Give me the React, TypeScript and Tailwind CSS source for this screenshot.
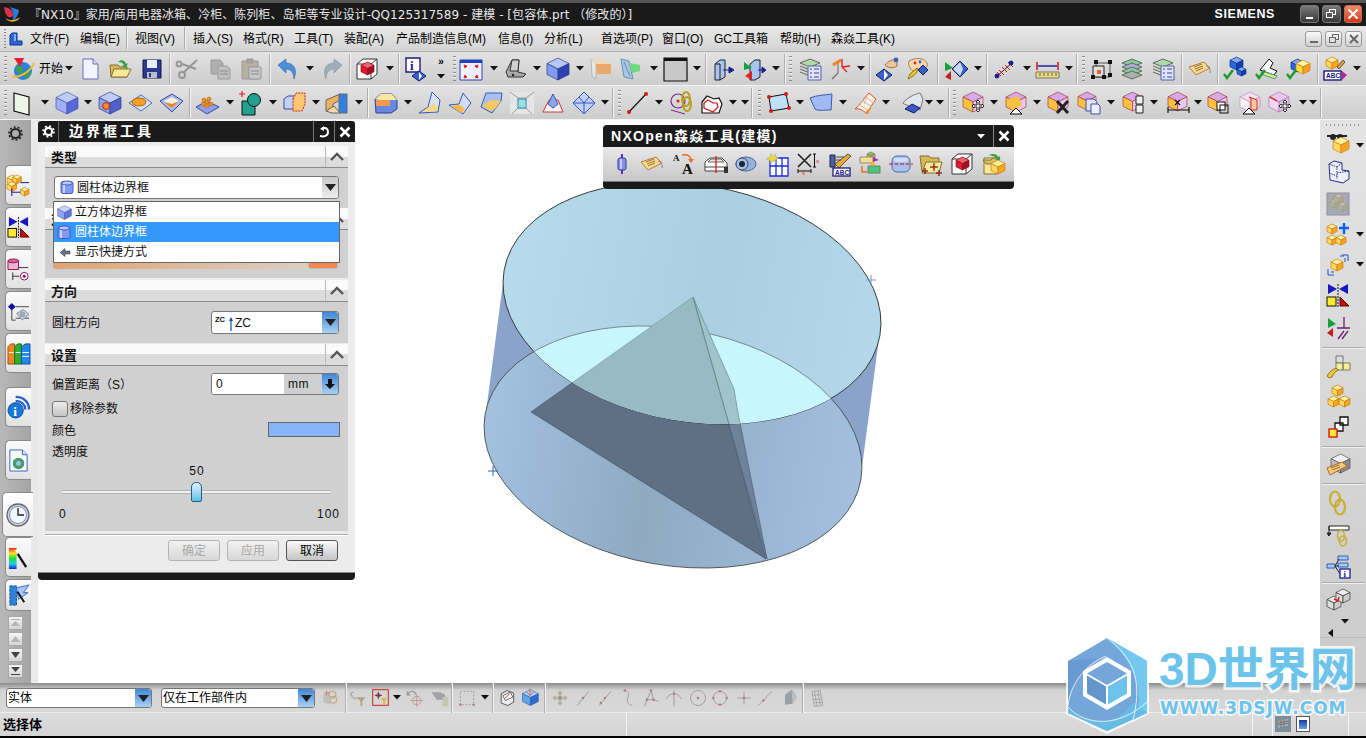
import React from 'react';

const cube = (x: number, y: number, s: number, t: string, l: string, r: string, st = '#444') => (
  <g stroke={st} strokeWidth="0.7" strokeLinejoin="round">
    <path d={`M${x + s / 2} ${y}L${x + s} ${y + s / 4}L${x + s / 2} ${y + s / 2}L${x} ${y + s / 4}Z`} fill={t} />
    <path d={`M${x} ${y + s / 4}L${x + s / 2} ${y + s / 2}V${y + s}L${x} ${y + (3 * s) / 4}Z`} fill={l} />
    <path d={`M${x + s} ${y + s / 4}L${x + s / 2} ${y + s / 2}V${y + s}L${x + s} ${y + (3 * s) / 4}Z`} fill={r} />
  </g>
);
const blue = (x: number, y: number, s: number) => cube(x, y, s, '#c8d4f8', '#8ea4ee', '#5f78d8', '#3c4c98');
const gold = (x: number, y: number, s: number) => cube(x, y, s, '#fff2a0', '#ffd860', '#f5a623', '#c88010');
const purp = (x: number, y: number, s: number) => cube(x, y, s, '#d8a8e8', '#ffc040', '#e8c8f0', '#a04040');
const chk = <path d="M1 17l3 4 6-8" stroke="#1a9a30" strokeWidth="2.4" fill="none" />;
const tri = <path d="M12 17l6 6H6z" fill="#fff" stroke="#000" />;
const move = (
  <g stroke="#222" strokeWidth="1" fill="#fff">
    <path d="M16 11l2-2 2 2h-1v3h3v-1l2 2-2 2v-1h-3v3h1l-2 2-2-2h1v-3h-3v1l-2-2 2-2v1h3v-3z" />
  </g>
);
const pt = (x: number, y: number) => <circle cx={x} cy={y} r="1.500" fill="#a86060" />;
const gs = { stroke: '#808080', fill: 'none', strokeWidth: 1 };

const IC: Record<string, React.ReactNode> = {
  globe: (<><circle cx="12" cy="14" r="9" fill="#2f80dc" /><path d="M6 9c3-1 6 1 6 3s-2 4-4 4-4-4-2-7zM14 16c3-1 6-1 6 0s-3 5-5 5-3-4-1-5z" fill="#35a548" /><path d="M1 19C8 22 20 14 23 6" stroke="#f0c020" strokeWidth="2" fill="none" /><path d="M3 1h10l-4 9z" fill="#e02030" /></>),
  new: (<><path d="M5 2h10l5 5v15H5z" fill="#f4f4ff" stroke="#6a6ac0" /><path d="M15 2v5h5" fill="#dde" stroke="#6a6ac0" /></>),
  open: (<><path d="M2 8h8l2 2h7v10H3z" fill="#d8b858" stroke="#807030" /><path d="M3 20l3-8h17l-4 8z" fill="#fbe89a" stroke="#807030" /><path d="M10 5c3-3 7-2 8 2l2-1-2 5-4-2 2-1c-1-2-3-3-6-3z" fill="#30a040" /></>),
  save: (<><path d="M3 3h18v18H3z" fill="#2c3a90" stroke="#10184a" /><path d="M7 3h10v8H7z" fill="#e8ecff" /><path d="M7 15h10v6H7z" fill="#b8bcc8" /><path d="M9 16h2v4H9z" fill="#2c3a90" /></>),
  cut: (<g stroke="#969696" strokeWidth="2" fill="none"><path d="M21 3L8 15M20 12L6 7" /><circle cx="6" cy="18" r="3" /><circle cx="3" cy="7" r="2.4" /></g>),
  copy: (<g fill="#b0b0b0" stroke="#999"><path d="M3 3h9l3 3v11H3z" /><path d="M10 9h9l3 3v10H10z" fill="#c0c0c0" /><path d="M12 14h8M12 17h8" stroke="#888" /></g>),
  paste: (<g stroke="#999"><path d="M3 4h16v18H3z" fill="#b8b0a0" /><path d="M8 2h6v4H8z" fill="#a4a4a4" /><path d="M10 10h12v12H10z" fill="#c8c8c8" /><path d="M12 14h8M12 17h8" stroke="#888" /></g>),
  undo: (<path d="M2 8l8-6v4c7 0 12 5 8 16 0-6-3-10-8-10v4z" fill="#4f8fd8" stroke="#2860a8" strokeWidth=".6" />),
  redo: (<path d="M22 8l-8-6v4C7 6 2 11 6 22c0-6 3-10 8-10v4z" fill="#a0aeb8" stroke="#84929c" strokeWidth=".6" />),
  wire: (<><path d="M2 7l6-5h14v15l-6 5H2z" fill="#fff" stroke="#333" /><path d="M2 7h14v15M16 7l6-5" stroke="#333" fill="none" />{cube(6, 5, 13, '#f06070', '#e01830', '#a01020', '#901020')}</>),
  info: (<><path d="M2 1h14v14H2z" fill="#fff" stroke="#1a1a80" strokeWidth="1.4" /><text x="6" y="13" fontSize="13" fontWeight="bold" fill="#1a1a80" fontFamily="Liberation Serif">i</text><path d="M15 14l7 5-7 5-7-5z" fill="#3860d8" stroke="#102060" /><path d="M15 15l3 4-3 4z" fill="#fff" /></>),
  fit: (<><path d="M1 3h22v20H1z" fill="#f0f0fc" stroke="#2040c0" /><path d="M1 3h22v3H1z" fill="#2040c0" /><path d="M5 8l3 1-2 2zM19 8l-3 1 2 2zM5 21l3-1-2-2zM19 21l-3-1 2-2z" fill="#e02020" stroke="#e02020" /></>),
  shade: (<><path d="M3 15L9 3h7l-1 12 8 2-3 3H5z" fill="#a8a8a8" stroke="#333" /><path d="M9 3h7l-1 11H7z" fill="#d0d0d0" stroke="#333" /><circle cx="10" cy="18" r="1.2" fill="#222" /></>),
  bcube: cube(1, 1, 22, '#b8c8f4', '#7f9cf0', '#3040b0', '#2c3c90'),
  orange: (<><path d="M2 2l5 4v16l-4-3z" fill="#e8e8e0" stroke="#b4b4b4" /><path d="M7 7h15v10H8z" fill="#eca868" /><path d="M2 2h12l8 5H7z" fill="#e8dcc0" /></>),
  green: (<><path d="M2 2l8 2 4 18-9-2z" fill="#a8c4e8" stroke="#7090a8" /><path d="M10 6l11 2v6l-8 2z" fill="#70d880" /><path d="M5 5l6 14" stroke="#7090a8" /></>),
  box: (<><path d="M1 1h23v23H1z" fill="#c8c8c8" stroke="#111" strokeWidth="1.2" /><path d="M1 1h23v3H1z" fill="#111" /></>),
  face: (<><path d="M3 7l5-4h5v17l-5 3H3z" fill="#a8c4f0" stroke="#222" /><path d="M3 7h5v16" fill="none" stroke="#222" /><path d="M11 13h9M17 10l5 3-5 3z" stroke="#102090" fill="#102090" /></>),
  face2: (<><path d="M7 7l5-4h5v17l-5 3H7z" fill="#a8c4f0" stroke="#222" /><path d="M1 5l8 6-8 2z" fill="#18a040" /><path d="M9 14v9l-7-4z" fill="#e02020" /><path d="M15 13h6M19 10l4 3-4 3z" stroke="#102090" fill="#102090" /></>),
  layl: (<><path d="M2 6l10-4 10 4-10 4z" fill="#b0d8a8" stroke="#666" /><path d="M2 9l10 4 10-4M2 12l10 4 10-4M2 15l10 4" stroke="#666" fill="#c8d8b0" /><path d="M10 9h13v14H10z" fill="#e0e4f8" stroke="#5060a8" /><path d="M12 12h2M16 12h5M12 16h2M16 16h5M12 20h2M16 20h5" stroke="#3040a0" /></>),
  csys: (<g fill="none" strokeWidth="1.4"><path d="M4 22l6-6" stroke="#777" /><path d="M10 16V6" stroke="#888" /><path d="M14 10l8-1M14 10V2M14 10l5 5" stroke="#e02020" /><path d="M5 8l8-5" stroke="#f08020" strokeWidth="3" /></g>),
  hand: (<><path d="M10 8c3-4 8-6 12-5v6c-3 2-8 3-12-1z" fill="#f0c898" stroke="#987040" /><circle cx="21" cy="3" r="2.4" fill="#4060c0" /><path d="M9 12l8 6-8 6-8-6z" fill="#3860c8" stroke="#102060" /><path d="M9 13l4 5-4 5z" fill="#fff" /></>),
  palette: (<><path d="M4 4c6-4 16-3 18 2s-4 7-9 6l-4 2c-2 1-7-6-5-10z" fill="#f8d8a8" stroke="#a08050" /><circle cx="10" cy="6" r="1.4" fill="#e02020" /><circle cx="15" cy="5" r="1.4" fill="#3060d0" /><path d="M12 15c-2 3-5 5-9 7l2-5 7-6z" fill="#e8c830" stroke="#987010" /><path d="M18 8l5 5-5 5-5-5z" fill="#3860c8" stroke="#102060" /></>),
  aim: (<><path d="M1 5l8 6-8 3z" fill="#18a040" /><path d="M7 14v9l-6-3z" fill="#c02020" /><path d="M16 4l8 8-8 8-8-8z" fill="#3860c8" stroke="#102060" /><path d="M16 5l3 7-3 7-7-7z" fill="#c8d8f8" /></>),
  stitch: (<g stroke="#c81818" strokeWidth="1"><path d="M3 21L21 5" stroke="#222" /><path d="M7 13l5 5M10 10l5 5M13 8l5 5M16 5l5 5M5 15l4 4" /><circle cx="19" cy="6" r="2" fill="#1a1a90" stroke="#1a1a90" /><circle cx="5" cy="19" r="2" fill="#1a1a90" stroke="#1a1a90" /></g>),
  ruler: (<><path d="M2 5v8M23 5v8" stroke="#c81818" strokeWidth="1.5" /><path d="M3 9h19" stroke="#1018a0" strokeWidth="1.4" /><path d="M1 15h23v6H1z" fill="#f0dc80" stroke="#776" /><path d="M5 16v3M9 16v3M13 16v3M17 16v3M21 16v3" stroke="#555" /></>),
  nodes: (<><path d="M6 6h14v14H6z" fill="none" stroke="#555" /><path d="M3 9h11v11H3z" fill="#e0e0e0" stroke="#222" /><path d="M7 13h4v4H7z" fill="#f06030" /><g fill="#111"><rect x="4" y="3" width="4" height="4" /><rect x="18" y="3" width="4" height="4" /><rect x="18" y="16" width="4" height="4" /><rect x="1" y="18" width="4" height="4" /><rect x="12" y="18" width="4" height="4" /></g></>),
  lay: (<g stroke="#607060"><path d="M2 6l10-4 10 4-10 4z" fill="#8cc8a0" /><path d="M2 10l10 4 10-4-10-4z" fill="#b0a8e0" /><path d="M2 14l10 4 10-4-10-4z" fill="#8cc8a0" /><path d="M2 18l10 4 10-4-10-4z" fill="#a8b0b0" /></g>),
  tag: (<><path d="M1 10l15-5 6 6-14 7z" fill="#f8d890" stroke="#b08040" /><path d="M6 10l8-3M7 12l8-3M8 14l7-3" stroke="#987030" /><path d="M18 9c3 1 5 4 4 7" stroke="#888" fill="none" /></>),
  chkb: (<>{cube(7, 0, 13, '#80a8f8', '#2868e0', '#1040b0', '#103080')}{cube(14, 10, 9, '#80a8f8', '#2868e0', '#1040b0', '#103080')}{chk}</>),
  chkh: (<><path d="M5 13L14 2l4 4-3 5 7 3-3 4z" fill="#fff" stroke="#111" /><path d="M7 14l15 5-2 3L6 17z" fill="#f0e870" stroke="#30a0a0" />{chk}</>),
  chkg: (<>{cube(5, 2, 13, '#80a8f8', '#2868e0', '#1040b0', '#103080')}{cube(10, 3, 14, '#fff2a0', '#ffe040', '#f5a020', '#c88010')}{chk}</>),
  abc: (<>{gold(3, 0, 12)}<path d="M14 10l6-7 2 2-6 7z" fill="#e8a020" stroke="#555" /><rect x="1" y="14" width="17" height="9" fill="#fff" stroke="#1a1a80" strokeWidth="1.4" /><text x="3" y="21" fontSize="6.5" fontWeight="bold" fill="#1a1a80" fontFamily="Liberation Sans">ABC</text><path d="M19 14l5 4-5 5z" fill="#c020a0" /></>),
  rect: (<><path d="M3 2l15 4v18L3 20z" fill="#eef6ea" stroke="#111" strokeWidth="1.2" /></>),
  bcube2: cube(2, 1, 22, '#c0ccf8', '#a0b0f4', '#5868d8', '#4858a8'),
  hole: (<>{cube(2, 1, 22, '#c0ccf8', '#8ea0ec', '#5060c8', '#303c90')}<circle cx="9" cy="15" r="3.4" fill="#f09020" stroke="#d02020" /></>),
  boss: (<><path d="M1 12L13 4l11 8-11 8z" fill="#d8e4f8" stroke="#5068b8" /><ellipse cx="11" cy="11" rx="7" ry="4" fill="#f5a020" stroke="#b06010" /></>),
  pocket: (<><path d="M1 10l12-7 11 7-11 11z" fill="#a8b8f0" stroke="#3848a0" /><path d="M5 10l8-4 7 4-7 7z" fill="#f8f0e0" /><path d="M5 11l8 6 7-7-7 3z" fill="#f08020" /></>),
  pads: (<><path d="M1 16l11-6 12 6-12 7z" fill="#8ea0ec" stroke="#3848a0" /><g fill="#f09020" stroke="#b06010" strokeWidth=".5"><circle cx="8" cy="13" r="2" /><circle cx="12" cy="11" r="2" /><circle cx="16" cy="13" r="2" /><circle cx="12" cy="15" r="2" /><circle cx="9" cy="9" r="2" /><circle cx="14" cy="8" r="2" /></g></>),
  teal: (<><path d="M4 10h13v14H4z" fill="#20a090" stroke="#111" /><circle cx="16" cy="9" r="6.5" fill="#20a090" stroke="#111" /><path d="M1 3h6M4 0v6" stroke="#e02020" strokeWidth="1.2" /></>),
  csplit: (<><path d="M1 8l4-3h10v13H1z" fill="#c0d0f8" stroke="#3848a0" /><path d="M10 8l3-6h9v11l-3 7h-9z" fill="#f8c870" stroke="#d02020" strokeDasharray="2 1" /></>),
  wall: (<><path d="M1 9l14-6v6L8 13v7H1z" fill="#f0b060" stroke="#666" /><path d="M14 3h8v19h-8z" fill="#3080e0" stroke="#666" /><path d="M1 20l8-5 6 7H7z" fill="#f8d8a8" stroke="#666" /></>),
  blend: (<><path d="M1 8l6-5h11l5 6v9l-6 4H2z" fill="#6888e0" stroke="#3040a0" /><path d="M1 8l6-5h11l5 6H6z" fill="#f8e8a0" /><path d="M2 9h14v6H2z" fill="#f09850" /></>),
  sh1: (<><path d="M14 1l8 8-2 12L1 22l9-6z" fill="#d8e4fa" stroke="#3858b8" /><path d="M4 21l12-9 4 5v3z" fill="#f8d880" /></>),
  sh2: (<><path d="M1 14l10-1 4-11 8 10-8 11z" fill="#d0dcf8" stroke="#3858b8" /><path d="M3 15l9-1 5 4-4 4z" fill="#f8b840" /></>),
  sh3: (<><path d="M6 2h16l-1 8-9 12-11-6z" fill="#a8c0f0" stroke="#3858b8" /><path d="M2 15l9-6 10 1-6 8-5 2z" fill="#f8c860" /></>),
  sh4: (<><path d="M0 1h24v22H0z" fill="#e4e6e6" /><path d="M0 1l8 6h8l8-6M8 7v4M16 7v4M2 23l6-6h8l6 6" stroke="#999" fill="none" /><path d="M8 8h8v9H8z" fill="#9adfea" stroke="#3090a8" /></>),
  sh5: (<><path d="M2 21l6-12h9l5 12z" fill="#f8f8ff" stroke="#d03030" /><path d="M7 13l5-10 5 10-5 4z" fill="#88a8e8" stroke="#3858b8" /></>),
  sh6: (<><path d="M12 1l11 11-11 11L1 12z" fill="#c0d0f8" stroke="#3858b8" /><path d="M1 12h22M7 6l5 6 5-6M12 12v11" stroke="#3858b8" fill="none" /></>),
  line: (<><path d="M3 21L20 3" stroke="#111" strokeWidth="1.2" /><circle cx="20" cy="3" r="2" fill="#d81818" /><circle cx="3" cy="21" r="2" fill="#d81818" /></>),
  chain: (<><circle cx="9" cy="10" r="7" fill="none" stroke="#7a2a8a" strokeWidth="1.2" /><circle cx="9" cy="10" r="1.5" fill="#d81818" /><path d="M2 19l14 4" stroke="#7a2a8a" /><ellipse cx="17" cy="8" rx="4" ry="7" fill="none" stroke="#b8a020" strokeWidth="2" /><ellipse cx="18" cy="13" rx="4" ry="7" fill="none" stroke="#b8a020" strokeWidth="2" /></>),
  heart: (<><path d="M3 11l5-6 7 3 5-1 3 6-3 9H3z" fill="#fff" stroke="#111" strokeWidth="1.2" /><path d="M5 12l4-3 5 3 4 0 1 4-5 5-9-4z" fill="none" stroke="#d01818" strokeWidth="1.2" /></>),
  qrect: (<><path d="M3 6l17-3 3 14-18 3z" fill="#c0e0f8" stroke="#111" /><g fill="#d81818"><circle cx="3" cy="6" r="2" /><circle cx="20" cy="3" r="2" /><circle cx="23" cy="17" r="2" /><circle cx="5" cy="20" r="2" /></g></>),
  surf: (<path d="M1 7c7-3 15-3 22-4l-1 16c-7 0-14 1-16-1z" fill="#a0baf4" stroke="#3858b8" />),
  mesh: (<><path d="M3 18C8 14 12 7 17 2l7 6c-3 4-7 11-9 15C11 19 7 17 3 18z" fill="#fff0e0" stroke="#e05020" /><path d="M8 14l9 6M11 10l9 6M14 6l8 6M11 8l-3 6M15 5l-3 8" stroke="#bbb" /><path d="M14 22l4-4" stroke="#f09020" strokeWidth="2" /></>),
  wrap: (<><path d="M3 12c6-7 13-9 17-10l3 6-3 11-9-3c-3-2-6-2-8-4z" fill="#e4e4ee" stroke="#777" /><path d="M5 18l7-5 8 4-6 5z" fill="#3858c8" stroke="#102060" /></>),
  mv1: (<>{purp(3, 1, 20)}{move}</>),
  mv2: (<>{purp(2, 1, 20)}<path d="M4 8l10-3 4 8-6 6-7-2z" fill="#f8c040" />{tri}</>),
  mv3: (<>{purp(2, 1, 20)}<path d="M11 10l11 12M22 10L11 22" stroke="#222" strokeWidth="3" /></>),
  mv4: (<>{purp(1, 1, 18)}<path d="M9 8h8l3 3v9H9z" fill="#dde0f8" stroke="#4050a0" /><path d="M14 13h7l2 2v8h-9z" fill="#eef" stroke="#4050a0" /></>),
  mv5: (<>{purp(2, 1, 19)}<path d="M15 5h7v8h-7zM15 14h7v8h-7z" fill="#f0f0f0" stroke="#222" /></>),
  mv6: (<>{purp(2, 1, 19)}<path d="M2 19h21M2 16v6M23 16v6" stroke="#111" strokeWidth="1.2" /><path d="M9 9l5 5M14 9l-5 5" stroke="#111" strokeWidth="1.2" /></>),
  mv7: (<>{purp(2, 1, 19)}<rect x="11" y="11" width="8" height="8" fill="#fff" stroke="#111" /><rect x="14" y="14" width="8" height="8" fill="none" stroke="#111" /></>),
  mv8: (<>{cube(3, 1, 20, '#f0e0f0', '#f8f0f8', '#f0d0e0', '#c090c0')}<path d="M12 6l8 3v10h-6V8z" fill="#f8c8a0" stroke="#d83030" />{tri}</>),
  mv9: (<>{cube(2, 1, 20, '#e8c8f0', '#f0d8f0', '#e0c0e8', '#b070b0')}<path d="M3 6l7 4" stroke="#e03030" strokeWidth="1.5" />{move}</>),
  cyl: (<><path d="M12 2v20" stroke="#7020c0" strokeWidth="2" /><rect x="8" y="6" width="8" height="12" rx="2" fill="#8890e8" stroke="#3040a0" /><rect x="10" y="7" width="2" height="10" fill="#c8ccf8" /></>),
  aa: (<><text x="1" y="9" fontSize="9" fontWeight="bold" fill="#111" fontFamily="Liberation Serif">A</text><text x="10" y="22" fontSize="15" fontWeight="bold" fill="#111" fontFamily="Liberation Serif">A</text><path d="M10 3c6-1 9 1 9 6" stroke="#e87020" strokeWidth="1.5" fill="none" /><path d="M16 7h6l-3 4z" fill="#e87020" /></>),
  car: (<><path d="M1 10l5-4h12l5 5v8H1z" fill="#fff" stroke="#444" /><path d="M4 10l3-3h10l3 3z" fill="#e8e8e8" stroke="#666" /><path d="M1 15h23" stroke="#444" /><path d="M12 4v17" stroke="#d81818" strokeWidth="1.3" /><path d="M20 15h4v6h-4z" fill="#333" /></>),
  bore: (<><ellipse cx="13" cy="12" rx="10" ry="7" fill="#98b0d8" stroke="#5068a0" /><circle cx="9" cy="12" r="6" fill="#a8c0e8" stroke="#304878" /><circle cx="9" cy="12" r="3" fill="#223" /></>),
  grid: (<><path d="M5 6h18v18H5z" fill="#fff" stroke="#1a2ae0" strokeWidth="1.3" /><path d="M5 14h18M11 6v18M17 6v18" stroke="#1a2ae0" strokeWidth="1.3" /><path d="M6 1l2 3 3-2-1 3 4 1-4 2 1 3-3-2-2 3-1-4-4-1 4-2z" fill="#f8d820" stroke="#80b0e0" strokeWidth=".5" /></>),
  dimx: (<><path d="M2 2l13 13M15 2L2 15" stroke="#222" strokeWidth="1.600" /><path d="M2 19h13M2 17v4M15 17v4M17 2h3M17 15h3M18.500 2v13" stroke="#111" /><text x="6" y="23" fontSize="6" fill="#d01818" fontFamily="Liberation Sans">x</text><text x="20" y="11" fontSize="6" fill="#d01818" fontFamily="Liberation Sans">x</text></>),
  note: (<><path d="M2 3h5v12H2z" fill="#5060a8" stroke="#223" /><path d="M7 12L20 2l3 2-12 12z" fill="#f0a830" stroke="#555" /><path d="M8 5h8M8 8h5" stroke="#445" /><rect x="5" y="16" width="17" height="8" fill="#fff" stroke="#1a1a80" strokeWidth="1.3" /><text x="7" y="23" fontSize="6.5" fontWeight="bold" fill="#1a1a80" fontFamily="Liberation Sans">ABC</text></>),
  exch: (<>{cube(9, 0, 8, '#70d070', '#f0b020', '#d8a040', '#777')}<path d="M2 5h13v6H2z" fill="#f8e090" stroke="#888" /><path d="M10 14h12v7H10z" fill="#48c878" stroke="#777" /><path d="M12 13l3-4 3 4z" fill="#f8b820" /><path d="M4 14v6h5" stroke="#e07020" strokeWidth="1.5" fill="none" /><path d="M15 5l6 3-6 2z" fill="#a030c0" /></>),
  tube: (<><rect x="3" y="4" width="18" height="16" rx="5" fill="#a8c0f0" stroke="#5068a8" /><rect x="5" y="6" width="14" height="4" rx="2" fill="#d0dcf8" /><path d="M0 12h24" stroke="#b01818" strokeDasharray="4 1.5" /></>),
  fpts: (<><path d="M1 4h9l2 2h8v13H3z" fill="#d8b858" stroke="#807030" /><path d="M3 21l4-11h16l-3 11z" fill="#fbe89a" stroke="#807030" /><path d="M11 15h8M15 11v8M3 19h6M6 16v6M17 21h6M20 18v6" stroke="#111" /><circle cx="15" cy="15" r="1.500" fill="#e01818" /><circle cx="6" cy="19" r="1.500" fill="#e01818" /><circle cx="20" cy="21" r="1.500" fill="#e01818" /></>),
  opcube: (<><path d="M3 6h14v16H3z" fill="#fbe89a" stroke="#807030" /><path d="M2 8h8l2-2h7l-3 6H5z" fill="#d8c060" stroke="#807030" /><path d="M8 3c4-2 8-1 9 2l2-1-1 5-4-2 2-1c-1-1-4-2-8-3z" fill="#30a040" />{gold(10, 8, 14)}</>),
  binoc: (<><circle cx="7" cy="4" r="3" fill="#223" /><circle cx="14" cy="4" r="3" fill="#223" />{gold(7, 4, 16)}<path d="M1 3h20" stroke="#222" strokeWidth="2" /></>),
  wireg: (<g fill="#eef0f8" stroke="#2a2a90"><path d="M3 4l5-3 8 2v7l7 1v8l-6 4-13-3z" /><path d="M3 4l8 3v12M11 7l5-4M11 13l12-2M3 13l8 3" fill="none" strokeDasharray="1.5 1" /></g>),
  grayc: (<><rect x="1" y="1" width="22" height="22" fill="#a8a8b0" stroke="#9090a8" /><g opacity=".7">{cube(4, 7, 9, '#d0c8a8', '#c0b890', '#b0a880', '#998')}{cube(12, 10, 9, '#d0c8a8', '#c0b890', '#b0a880', '#998')}{cube(8, 2, 9, '#d0c8a8', '#c0b890', '#b0a880', '#998')}</g></>),
  addc: (<>{gold(1, 2, 10)}{gold(1, 13, 10)}{gold(10, 13, 10)}<path d="M18 1v11M13 6h10" stroke="#0a60f0" strokeWidth="2.4" /></>),
  arrc: (<>{gold(5, 7, 12)}<path d="M16 3h6v6M19 6v4M14 4h4" stroke="#2050d0" fill="none" /><path d="M2 17v6h6M5 20h3" stroke="#2050d0" fill="none" /></>),
  bowtie: (<><path d="M2 0l9 5-9 5zM22 0l-9 5 9 5z" fill="#1818c0" /><rect x="1" y="13" width="9" height="9" fill="#ffe830" stroke="#111" /><path d="M14 13l9 9h-9z" fill="#c01010" stroke="#600" /><path d="M12 0v24" stroke="#111" strokeDasharray="2 1" /></>),
  perp: (<><path d="M2 3l8 6-8 4z" fill="#18a040" /><path d="M7 13v9l-6-4z" fill="#c02020" /><path d="M18 2v11M11 13h13M12 24l6-8M16 24l6-8" stroke="#702070" strokeWidth="1.3" /></>),
  key: (<><path d="M10 2h7v7h-7z" fill="#ddd" stroke="#777" /><path d="M10 9h7v7h-7zM17 9h7v7h-7z" fill="#f8f090" stroke="#777" /><path d="M1 22c2-4 5-6 9-8l2 2c-3 2-5 4-6 7-2 1-4 1-5-1z" fill="#e8c840" stroke="#987010" /></>),
  three: (<>{gold(6, 1, 11)}{gold(2, 12, 11)}{gold(13, 12, 11)}</>),
  steps: (<><path d="M14 2h8v8h-8zM9 8h8v8H9z" fill="#fff" stroke="#111" strokeWidth="1.3" /><rect x="3" y="14" width="8" height="8" fill="#ffe830" stroke="#d81818" strokeWidth="1.4" /></>),
  tagc: (<>{cube(5, 1, 19, '#eee', '#bbb', '#8a8a8a', '#555')}<path d="M1 15l15-6 5 4-17 9z" fill="#f8c880" stroke="#b06820" /><path d="M5 15l8-3M6 17l8-3" stroke="#987030" /></>),
  link: (<g fill="none" stroke="#c8b030" strokeWidth="2.2"><ellipse cx="9" cy="8" rx="5" ry="7.5" /><ellipse cx="14" cy="16" rx="5" ry="7.5" /></g>),
  linkl: (<><path d="M3 4h20v4H3z" fill="#fff" stroke="#222" /><path d="M3 4v8M1 11h4l-2 3z" stroke="#222" fill="#222" /><g fill="none" stroke="#c8b030" strokeWidth="1.6"><ellipse cx="15" cy="14" rx="3.5" ry="5.5" /><ellipse cx="17" cy="19" rx="3.5" ry="5" /></g></>),
  tree: (<><path d="M12 2h10v4H12zM12 9h10v4H12zM1 10h8v4H1z" fill="#a8c8f8" stroke="#3060b0" /><path d="M9 12l4-7M9 12h4M9 12l5 8" stroke="#223" /><rect x="14" y="15" width="10" height="9" fill="#fff" stroke="#1a1a90" strokeWidth="1.3" /><text x="17.5" y="23" fontSize="9" fontWeight="bold" fill="#1a1a90" fontFamily="Liberation Serif">i</text></>),
  twoc: (<>{cube(1, 8, 14, '#eee', '#ddd', '#ccc', '#333')}{cube(10, 1, 14, '#eee', '#ddd', '#ccc', '#333')}<path d="M8 11l4 2 1-4" stroke="#d81818" fill="none" strokeWidth="1.4" /></>),
  lasm: (<>{gold(0, 1, 11)}{gold(6, 1, 9)}{gold(0, 8, 10)}{gold(14, 14, 9)}<path d="M5 15v8M5 19h9M14 9h9" stroke="#1010a0" /></>),
  lbow: (<><path d="M2 1l9 5-9 5zM22 1l-9 5 9 5z" fill="#1818c0" /><rect x="1" y="13" width="9" height="9" fill="#ffe830" stroke="#111" /><path d="M14 13l9 9h-9z" fill="#c01010" stroke="#600" /><path d="M12 1v22" stroke="#111" strokeDasharray="2 1" /></>),
  lcyl: (<><path d="M1 3h11v9H1z" fill="#e8b8d0" stroke="#901050" /><ellipse cx="6.5" cy="3" rx="5.5" ry="2" fill="#e060a0" stroke="#901050" /><path d="M12 10h10M6 15v8M6 19h7" stroke="#333" /><circle cx="18" cy="19" r="4" fill="#fff" stroke="#901050" /><circle cx="18" cy="19" r="1.6" fill="#901050" /></>),
  lnav: (<><path d="M5 3L1 7l4 4 4-4z" fill="#1010a0" /><path d="M5 10v11M5 21h4M9 7h14M9 19h14" stroke="#444" /><path d="M10 14l7-4 6 5-7 6z" fill="#c8d0e0" stroke="#8090a8" /><circle cx="16" cy="15" r="3" fill="#a0a8b8" /></>),
  lbook: (<><path d="M1 5l3-3h4v21H1z" fill="#f08820" stroke="#a05010" /><path d="M8 5l3-3h4v21H8z" fill="#30b030" stroke="#107010" /><path d="M15 5l4-3h5v21h-9z" fill="#2088e8" stroke="#1050a0" /><path d="M2 11h5M9 11h5M16 11h7M16 15h7" stroke="#fff" /></>),
  lrss: (<><circle cx="9" cy="15" r="8" fill="#1878d8" stroke="#0c4a98" /><text x="6.5" y="21" fontSize="14" fontWeight="bold" fill="#fff" fontFamily="Liberation Serif">i</text><path d="M9 5c6 0 10 4 10 9M9 1c9 0 14 6 14 13" stroke="#2a60d0" strokeWidth="2.4" fill="none" /></>),
  ldoc: (<><path d="M3 1h13l5 5v17H3z" fill="#fff" stroke="#3060c8" /><path d="M16 1v5h5" fill="#cde" stroke="#3060c8" /><circle cx="12" cy="15" r="6" fill="#4a9a70" /><circle cx="12" cy="15" r="2.5" fill="#9ac8e8" /></>),
  lclock: (<><circle cx="12" cy="12" r="11" fill="#c8d4f0" stroke="#666" strokeWidth="1.3" /><circle cx="12" cy="12" r="8.5" fill="#f4f6ff" stroke="#8090b0" /><path d="M12 5v7h6" stroke="#222" strokeWidth="1.4" fill="none" /></>),
  lrain: (<><defs><linearGradient id="rb" x1="0" y1="0" x2="0" y2="1"><stop offset="0" stopColor="#ff2020" /><stop offset=".25" stopColor="#ffe020" /><stop offset=".5" stopColor="#20e040" /><stop offset=".75" stopColor="#20d0e0" /><stop offset="1" stopColor="#2020e0" /></linearGradient></defs><rect x="2" y="2" width="8" height="22" fill="url(#rb)" /><path d="M11 8l9 14" stroke="#111" strokeWidth="2.4" /><path d="M11 1l1 3 3 1-3 1-1 3-1-3-3-1 3-1z" fill="#fff" /></>),
  lwing: (<><path d="M3 2h7v20H3z" fill="#3080d8" stroke="#1050a0" strokeDasharray="3 1" /><path d="M10 4l13-3-6 8 5 0-10 7z" fill="#a8c8f8" stroke="#3070d0" /><path d="M11 8l7 11" stroke="#111" strokeWidth="2" /></>),
  b1: (<><path d="M4 8l8-4v16l-8-3z" fill="#b8b8b8" /><g fill="none" strokeWidth={1.600} stroke="#c0a070"><circle cx="15" cy="8" r="4" /><circle cx="16" cy="14" r="4" /></g><path d="M8 9v-6M5 6h6" stroke="#a86060" /></>),
  b2: (<><path d="M3 6c1 6 5 7 9 6M3 6l4-1M3 6l2 4" stroke="#8a9a9a" strokeWidth="1.400" fill="none" /><path d="M11 11h10l-4 5v6h-2v-6z" fill="#a09470" /></>),
  b3: (<><rect x="1" y="1" width="22" height="22" fill="none" stroke="#c81818" strokeWidth="1.300" /><path d="M9 4v10M4 9h10" stroke="#702020" strokeWidth="1.200" /><circle cx="9" cy="9" r="2.500" fill="none" stroke="#702020" /><path d="M13 13h8l-3 4v4h-2v-4z" fill="#e8b020" /></>),
  b4: (<><path d="M3 7c3-4 9-4 10 1" stroke="#8a8a8a" strokeWidth="1.600" fill="none" /><path d="M2 3v6h5z" fill="#8a8a8a" /><circle cx="14" cy="15" r="5" fill="none" stroke="#b08080" /><path d="M14 7v16M6 15h16" stroke="#b08080" /></>),
  b5: (<><path d="M2 5h10l6 3v6H8z" fill="#909090" /><path d="M15 11h7v11h-7z" fill="#c0c0a8" /></>),
  b6: (<><path d="M4 4h16v16H4z" fill="none" stroke="#777" strokeDasharray="2 2" /><g>{pt(4, 20)}{pt(20, 20)}</g></>),
  b7: (<><path d="M5 18V7l7-4 8 3v11l-7 4z" fill="#eee" stroke="#333" /><path d="M7 9l9-4 3 6-9 4z" fill="#fff" stroke="#444" /><path d="M10 12l5-5" stroke="#d81818" strokeWidth="1.200" /></>),
  b8: (<>{cube(3, 2, 19, '#a8d8f8', '#50a0e8', '#2060c8', '#1850a0')}<path d="M12 1v9M8 5l4 4 5-5" stroke="#e04040" fill="none" /></>),
  s1: (<><path d="M12 3l3 3-3 3-3-3zM12 15l3 3-3 3-3-3zM6 9l3 3-3 3-3-3zM18 9l3 3-3 3-3-3z" fill="#a8a088" /><circle cx="12" cy="12" r="3" fill="#90a090" />{pt(12, 12)}</>),
  s2: (<><path d="M5 21L19 4" {...gs} />{pt(12, 12)}</>),
  s3: (<><path d="M5 21L19 4" {...gs} />{pt(12, 12)}{pt(7, 18)}</>),
  s4: (<><path d="M8 3c3 0 6 3 4 8s0 9 5 10" {...gs} />{pt(8, 3)}</>),
  s5: (<><path d="M4 22L12 3l3 11 6 2M7 14h8" {...gs} />{pt(12, 3)}{pt(7, 14)}{pt(15, 14)}</>),
  s6: (<><path d="M12 3v19M3 13c2-4 5-6 9-6s7 2 9 6" {...gs} />{pt(12, 7)}</>),
  s7: (<><circle cx="12" cy="12" r="9" {...gs} />{pt(12, 12)}</>),
  s8: (<><circle cx="12" cy="12" r="8" {...gs} />{pt(12, 4)}{pt(12, 20)}{pt(4, 12)}{pt(20, 12)}</>),
  s9: (<><path d="M12 4v16M4 12h16" {...gs} />{pt(12, 12)}</>),
  s10: (<><path d="M4 21L20 4" {...gs} />{pt(10, 15)}</>),
  s11: (<><path d="M6 20V8l8-6 6 9-5 8z" fill="#888f98" /><path d="M14 4l6 7-5 8" fill="#b0b8c0" /></>),
  s12: (<><path d="M6 4l10-1 3 18-10 1z" fill="none" stroke="#909090" /><path d="M6 9l11-1M7 14l11-1M8 18l11-1M9 4l3 18M13 3l3 18" stroke="#909090" /></>),
};

const FONT = "font-['Liberation_Sans','Noto_Sans_CJK_SC',sans-serif]";

const Icon = ({ n, s = 24 }: { n: string; s?: number }) => (
  <svg width={s} height={s} viewBox="0 0 24 24" className="block shrink-0 overflow-visible">{IC[n]}</svg>
);
const Caret = () => (
  <svg width="8" height="5" viewBox="0 0 8 5" className="block"><path d="M0 0h8L4 4.500z" fill="#111" /></svg>
);
const Grip = () => (
  <div className="w-[3px] h-[25px] bg-[repeating-linear-gradient(to_bottom,#8a8a8a_0,#8a8a8a_1px,#f4f4f4_1px,#f4f4f4_2px,transparent_2px,transparent_4px)]" />
);
const Sep = () => <div className="w-[2px] h-[30px] border-l border-[#aeaeae] border-r border-r-[#f4f4f4]" />;

type It = [string, number];
const widthOf = (k: string) => (k === 'g' ? 3 : k === '|' ? 2 : k === '^' ? 8 : k === 'more' ? 10 : 24);
const Row = ({ items, fade }: { items: It[]; fade?: boolean }) => {
  let end = 0;
  return (
    <div className="flex items-center h-full">
      {items.map(([k, x], i) => {
        const w = widthOf(k);
        const ml = x - w / 2 - end;
        end = x + w / 2;
        const small = fade && k !== '|' && k !== '^';
        return (
          <div key={i} className="shrink-0" style={{ marginLeft: ml, width: w }}>
            {k === 'g' ? <Grip /> : k === '|' ? <Sep /> : k === '^' ? <Caret /> : k === 'more' ? (
              <div className="flex flex-col items-center gap-[8px]"><span className="text-[10px] leading-[8px] font-bold text-black">»</span><Caret /></div>
            ) : small ? (
              <div className={`flex justify-center ${k === 'b3' ? '' : k === 'b7' || k === 'b8' ? 'opacity-90' : 'opacity-75'}`}><Icon n={k} s={k === 'b3' ? 17 : 20} /></div>
            ) : <Icon n={k} />}
          </div>
        );
      })}
    </div>
  );
};

const T1: It[] = [['g', 5], ['globe', 23], ['^', 69], ['new', 90], ['open', 120], ['save', 152], ['|', 170], ['cut', 188], ['copy', 220], ['paste', 251], ['|', 270], ['undo', 288], ['^', 310], ['redo', 332], ['|', 350], ['wire', 367], ['^', 390], ['|', 399], ['info', 416], ['more', 441], ['g', 454], ['fit', 471], ['^', 494], ['shade', 515], ['^', 537], ['bcube', 558], ['^', 580], ['orange', 601], ['green', 631], ['^', 654], ['box', 675], ['^', 697], ['|', 706], ['face', 724], ['face2', 755], ['^', 776], ['|', 785], ['g', 790], ['layl', 810], ['csys', 840], ['^', 861], ['|', 870], ['hand', 887], ['palette', 917], ['|', 938], ['aim', 956], ['^', 978], ['|', 987], ['stitch', 1004], ['^', 1027], ['ruler', 1047], ['^', 1069], ['|', 1077], ['g', 1083], ['nodes', 1102], ['lay', 1132], ['layl', 1163], ['|', 1182], ['tag', 1200], ['|', 1218], ['chkb', 1235], ['chkh', 1267], ['chkg', 1298], ['|', 1318], ['abc', 1335], ['^', 1357]];
const T2: It[] = [['g', 5], ['rect', 23], ['^', 45], ['bcube2', 66], ['^', 88], ['hole', 109], ['boss', 140], ['pocket', 171], ['|', 190], ['pads', 207], ['^', 230], ['teal', 250], ['^', 273], ['csplit', 295], ['^', 316], ['wall', 337], ['^', 359], ['|', 368], ['blend', 386], ['^', 408], ['sh1', 430], ['sh2', 460], ['sh3', 492], ['sh4', 522], ['sh5', 553], ['sh6', 584], ['^', 605], ['|', 613], ['g', 619], ['line', 638], ['^', 659], ['chain', 681], ['heart', 711], ['^', 733], ['^', 745], ['|', 752], ['g', 759], ['qrect', 778], ['^', 800], ['surf', 821], ['^', 843], ['mesh', 864], ['^', 886], ['wrap', 912], ['^', 929], ['^', 940], ['|', 949], ['g', 954], ['mv1', 972], ['^', 994], ['mv2', 1016], ['^', 1037], ['mv3', 1058], ['mv4', 1089], ['^', 1111], ['mv5', 1133], ['^', 1154], ['mv6', 1178], ['^', 1198], ['mv7', 1218], ['mv8', 1249], ['mv9', 1279], ['^', 1303], ['^', 1313], ['|', 1321]];
const FT: It[] = [['cyl', 19], ['tag', 49], ['aa', 81], ['car', 113], ['bore', 142], ['grid', 174], ['dimx', 205], ['note', 237], ['exch', 267], ['tube', 298], ['fpts', 328], ['wire', 359], ['opcube', 390]];
const B: It[] = [['b1', 330], ['|', 346], ['b2', 358], ['b3', 380], ['^', 397], ['b4', 415], ['b5', 440], ['|', 452], ['b6', 467], ['^', 485], ['|', 493], ['b7', 507], ['b8', 530], ['|', 545], ['s1', 560], ['s2', 583], ['s3', 605], ['s4', 628], ['s5', 651], ['s6', 674], ['s7', 698], ['s8', 720], ['s9', 744], ['s10', 765], ['s11', 790], ['|', 803], ['s12', 817]];

const menu: [string, number][] = [['文件(F)', 30], ['编辑(E)', 80], ['视图(V)', 135], ['插入(S)', 193], ['格式(R)', 243], ['工具(T)', 294], ['装配(A)', 344], ['产品制造信息(M)', 396], ['信息(I)', 498], ['分析(L)', 544], ['首选项(P)', 601], ['窗口(O)', 662], ['GC工具箱', 714], ['帮助(H)', 780], ['森焱工具(K)', 831]];

const TitleBar = () => (
  <div className="h-[26px] shrink-0 flex flex-col">
    <div className="h-[3px] bg-[#555555]" />
    <div className="flex-1 bg-[#1a1a1a] flex items-center relative font-['DejaVu_Sans','Noto_Sans_CJK_SC',sans-serif]">
      <svg width="20" height="18" viewBox="0 0 20 18" className="ml-[2px] shrink-0"><path d="M2 1c6 1 9 3 9 9-3 3-8 1-9-9z" fill="#e03048" /><path d="M8 1l9 3c-1 6-3 9-7 11 2-4 2-9-2-14z" fill="#2080e0" /><path d="M3 12c4 3 10 3 15-1-2 5-10 7-15 1z" fill="#f8b820" /></svg>
      <span className="ml-[7px] text-[12px] text-[#e8e8e8] whitespace-nowrap tracking-[0.04px]">『NX10』家用/商用电器冰箱、冷柜、陈列柜、岛柜等专业设计-QQ125317589 - 建模 - [包容体.prt （修改的）]</span>
      <span className="ml-auto mr-[25px] text-[12.5px] font-bold text-white tracking-[0.6px] font-['Liberation_Sans',sans-serif]">SIEMENS</span>
      <div className="flex gap-[3px] mr-[4px] -mt-[1px]">
        <div className="w-[19px] h-[18px] rounded-[3px] border border-[#777] bg-gradient-to-b from-[#7a7a7a] to-[#3a3a3a] flex items-end justify-center pb-[3px]"><div className="w-[7px] h-[2px] bg-white" /></div>
        <div className="w-[19px] h-[18px] rounded-[3px] border border-[#777] bg-gradient-to-b from-[#7a7a7a] to-[#3a3a3a] relative"><div className="absolute left-[6px] top-[3px] w-[7px] h-[6px] border border-white" /><div className="absolute left-[3px] top-[6px] w-[7px] h-[6px] border border-white bg-[#555]" /></div>
        <div className="w-[18px] h-[18px] rounded-[3px] border border-[#c86a50] bg-gradient-to-b from-[#f08a68] to-[#d03818] flex items-center justify-center">
          <svg width="12" height="12" viewBox="0 0 12 12"><path d="M1.500 1.500l9 9M10.500 1.500l-9 9" stroke="#fff" strokeWidth="2" /></svg>
        </div>
      </div>
    </div>
  </div>
);

const MdiBtn = ({ children }: { children: React.ReactNode }) => (
  <div className="w-[17px] h-[16px] rounded-[3px] border border-[#9a9a9a] bg-gradient-to-b from-[#fafafa] to-[#cfcfcf] flex items-center justify-center">{children}</div>
);

const MenuBar = () => (
  <div className="h-[26px] shrink-0 flex items-center bg-gradient-to-b from-[#e8e8e8] to-[#d4d4d4] border-b border-[#b0b0b0] text-[12px] text-black">
    <div className="ml-[4px] w-[2px] h-[20px] bg-[repeating-linear-gradient(to_bottom,#888_0,#888_1px,transparent_1px,transparent_3px)]" />
    <svg width="16" height="16" viewBox="0 0 16 16" className="ml-[2px] shrink-0"><path d="M4 2h5v8h5v4H2V4z" fill="#2868d8" stroke="#103080" /><path d="M6 3h2v7H6z" fill="#80b0f8" /></svg>
    <div className="flex relative items-center ml-[6px]">
      {menu.map(([t, x], i) => (
        <span key={t} className="shrink-0 whitespace-nowrap" style={{ width: i + 1 < menu.length ? menu[i + 1][1] - x : 80 }}>{t}</span>
      ))}
      <div className="absolute left-[96px] top-[-3px] w-[2px] h-[22px] border-l border-[#aaa] border-r border-r-[#f4f4f4]" />
      <div className="absolute left-[154px] top-[-3px] w-[2px] h-[22px] border-l border-[#aaa] border-r border-r-[#f4f4f4]" />
    </div>
    <div className="ml-auto mr-[4px] flex gap-[3px]">
      <MdiBtn><div className="w-[8px] h-[2px] bg-[#666] mt-[7px]" /></MdiBtn>
      <MdiBtn><div className="relative w-[10px] h-[9px]"><div className="absolute right-0 top-0 w-[7px] h-[6px] border border-[#666]" /><div className="absolute left-0 bottom-0 w-[7px] h-[6px] border border-[#666] bg-[#e0e0e0]" /></div></MdiBtn>
      <MdiBtn><svg width="10" height="10" viewBox="0 0 10 10"><path d="M1 1l8 8M9 1L1 9" stroke="#666" strokeWidth="2" /></svg></MdiBtn>
    </div>
  </div>
);

const Toolbar = ({ items, children }: { items: It[]; children?: React.ReactNode }) => (
  <div className="h-[34px] shrink-0 relative bg-gradient-to-b from-[#e2e2e2] to-[#cdcdcd] border-b border-[#f2f2f2]">
    <Row items={items} />
    {children}
  </div>
);

const Tab = ({ n, active, h }: { n: string; active?: boolean; h: string }) => (
  <div className={`${h} rounded-l-[5px] border border-r-0 border-[#8a8a8a] bg-gradient-to-b flex items-center justify-center ${active ? 'w-[31px] ml-[2px] from-white to-[#ececec]' : 'w-[26px] ml-[5px] from-[#fbfbfb] to-[#e2e2e2]'}`}>
    <Icon n={n} s={active ? 24 : 23} />
  </div>
);
const Scroll = ({ d, dim }: { d: string; dim?: boolean }) => (
  <div className="w-[15px] h-[14px] ml-[8px] border border-[#a8a8a8] bg-gradient-to-b from-[#f4f4f4] to-[#d4d4d4] flex items-center justify-center">
    <svg width="11" height="10" viewBox="0 0 11 10"><path d={d} fill={dim ? '#b4b4b4' : '#444'} /></svg>
  </div>
);

const LeftBar = () => (
  <div className="w-[38px] shrink-0 flex">
    <div className="w-[31px] bg-gradient-to-r from-[#b8b8b8] to-[#a4a4a4] flex flex-col relative z-10">
      <div className="ml-[8px] mt-[6px] w-[15px] h-[15px]">
        <svg width="15" height="15" viewBox="0 0 15 15"><circle cx="7.500" cy="7.500" r="4.500" fill="none" stroke="#222" strokeWidth="2" /><circle cx="7.500" cy="7.500" r="6.500" fill="none" stroke="#222" strokeWidth="1.600" strokeDasharray="2 2" /></svg>
      </div>
      <div className="mt-[24px] flex flex-col gap-[2px]">
        <Tab n="lasm" h="h-[40px]" /><Tab n="lbow" h="h-[40px]" /><Tab n="lcyl" h="h-[40px]" /><Tab n="lnav" h="h-[40px]" /><Tab n="lbook" h="h-[40px]" />
      </div>
      <div className="mt-[14px]"><Tab n="lrss" h="h-[40px]" /></div>
      <div className="mt-[13px]"><Tab n="ldoc" h="h-[40px]" /></div>
      <div className="mt-[12px]"><Tab n="lclock" active h="h-[45px]" /></div>
      <Tab n="lrain" h="h-[40px]" />
      <div className="mt-[2px]"><Tab n="lwing" h="h-[32px]" /></div>
      <div className="mt-[5px] flex flex-col gap-[2px]">
        <Scroll dim d="M1 1h9v1H1zM5.500 3L10 8H1z" /><Scroll dim d="M5.500 2L10 8H1z" /><Scroll d="M1 2h9L5.500 8z" /><Scroll d="M1 1h9L5.500 6zM1 8h9v1H1z" />
      </div>
    </div>
    <div className="w-[7px] bg-[#e9e9e9]" />
  </div>
);

const RightBtn = ({ n, mt, arrow }: { n: string; mt: number; arrow?: boolean }) => (
  <div className="flex items-center pl-[6px] relative z-10" style={{ marginTop: mt }}>
    <Icon n={n} />
    {arrow && <div className="ml-[6px]"><Caret /></div>}
  </div>
);
const RightSep = ({ mt }: { mt: number }) => <div className="mx-[2px] h-[2px] border-t border-[#aaa] border-b border-b-[#f2f2f2]" style={{ marginTop: mt }} />;
const RightBar = () => (
  <div className="w-[46px] shrink-0 flex flex-col relative bg-[#cdcdcd]">
    <div className="h-[518px] bg-gradient-to-b from-[#e4e4e4] to-[#cdcdcd] flex flex-col border-b border-[#bcbcbc]">
      <div className="mt-[4px] mx-[6px] h-[2px] bg-[repeating-linear-gradient(to_right,#999_0,#999_1px,transparent_1px,transparent_4px)]" />
      <RightBtn n="binoc" mt={7} arrow />
      <RightBtn n="wireg" mt={3} />
      <RightBtn n="grayc" mt={8} />
      <RightBtn n="addc" mt={6} arrow />
      <RightBtn n="arrc" mt={6} arrow />
      <RightBtn n="bowtie" mt={8} />
      <RightBtn n="perp" mt={7} />
      <RightSep mt={8} />
      <RightBtn n="key" mt={5} />
      <RightBtn n="three" mt={6} />
      <RightBtn n="steps" mt={7} />
      <RightSep mt={7} />
      <RightBtn n="tagc" mt={5} />
      <RightSep mt={6} />
      <RightBtn n="link" mt={6} />
      <RightBtn n="linkl" mt={7} />
      <RightBtn n="tree" mt={8} />
      <RightSep mt={4} />
      <RightBtn n="twoc" mt={4} />
      <div className="ml-[21px] mt-[7px]"><Caret /></div>
      <svg width="5" height="8" viewBox="0 0 5 8" className="ml-[8px] mt-[5px]"><path d="M5 0v8L0 4z" fill="#111" /></svg>
    </div>
  </div>
);

const Chevron = () => (
  <svg width="14" height="9" viewBox="0 0 14 9"><path d="M1 8l6-6 6 6" stroke="#555" strokeWidth="2.400" fill="none" /></svg>
);
const Head = ({ t, mt = 0 }: { t: string; mt?: number }) => (
  <div className="h-[22px] flex bg-gradient-to-b from-[#fafafa] from-50% to-[#dcdcdc] to-50% border-b border-[#8c8c8c]" style={{ marginTop: mt }}>
    <span className="flex-1 pl-[6px] text-[13px] font-bold leading-[24px] text-[#111]">{t}</span>
    <div className="w-[23px] border-l border-[#bbb] flex items-center justify-center"><Chevron /></div>
  </div>
);
const ComboArrow = ({ blue: b, down }: { blue?: boolean; down?: boolean }) => (
  <div className={`w-[16px] h-full rounded-r-[3px] flex items-center justify-center ${b ? 'bg-gradient-to-b from-[#3f86d8] to-[#a8d0f4]' : 'bg-gradient-to-b from-[#c8c8c8] to-[#eeeeee]'}`}>
    {down ? <svg width="12" height="12" viewBox="0 0 12 12"><path d="M4 1h4v5h3l-5 5-5-5h3z" fill="#111" /></svg> : <svg width="11" height="7" viewBox="0 0 11 7"><path d="M0 0h11L5.500 7z" fill="#222" /></svg>}
  </div>
);
const Btn = ({ t, on }: { t: string; on?: boolean }) => (
  <div className={`w-[52px] h-[21px] rounded-[3px] border flex items-center justify-center text-[12px] ${on ? 'border-[#555] text-black bg-gradient-to-b from-[#fafafa] to-[#c4c4c4]' : 'border-[#b4b4b4] text-[#a8a8a8] bg-gradient-to-b from-[#f2f2f2] to-[#d8d8d8]'}`}>{t}</div>
);
const CylI = () => (
  <svg width="14" height="15" viewBox="0 0 14 15"><rect x="1" y="1.500" width="12" height="12" rx="2" fill="#7f9cf0" stroke="#4858c0" /><ellipse cx="7" cy="3" rx="5.500" ry="2" fill="#b8c8f8" stroke="#4858c0" /><rect x="3" y="5" width="2" height="8" fill="#c8d4fa" /></svg>
);

const Dialog = () => (
  <div className="absolute left-0 top-[1px] w-[317px] h-[459px] flex flex-col text-[12px] text-[#111]">
    <div className="h-[21px] shrink-0 bg-[#1a1a1a] rounded-t-[3px] flex items-center text-white">
      <div className="w-[20px] h-full border-r border-[#666] flex items-center justify-center ml-[1px]">
        <svg width="13" height="13" viewBox="0 0 13 13"><circle cx="6.500" cy="6.500" r="3.600" fill="none" stroke="#fff" strokeWidth="2.200" /><circle cx="6.500" cy="6.500" r="5.500" fill="none" stroke="#fff" strokeWidth="1.600" strokeDasharray="2 2.300" /></svg>
      </div>
      <span className="ml-[10px] text-[14px] font-bold tracking-[3px]">边界框工具</span>
      <div className="ml-auto w-[21px] h-full border-l border-[#777] flex items-center justify-center">
        <svg width="12" height="12" viewBox="0 0 12 12"><path d="M2 10c4 1 8 0 8-4S7 1 4 3" stroke="#fff" strokeWidth="2" fill="none" /><path d="M6 0v5L2 3z" fill="#fff" /></svg>
      </div>
      <div className="w-[21px] h-full border-l border-[#777] flex items-center justify-center">
        <svg width="12" height="12" viewBox="0 0 12 12"><path d="M1.500 1.500l9 9M10.500 1.500l-9 9" stroke="#fff" strokeWidth="2.600" /></svg>
      </div>
    </div>
    <div className="flex-1 bg-[#ececec] px-[7px] pt-[4px] relative flex flex-col">
      <Head t="类型" />
      <div className="h-[40px] bg-[#d0d0d0] pl-[9px] pt-[8px]">
        <div className="w-[285px] h-[23px] bg-white border border-[#777] rounded-[3px] flex items-center justify-between">
          <div className="flex items-center gap-[3px] pl-[5px]"><CylI /><span>圆柱体边界框</span></div>
          <ComboArrow />
        </div>
      </div>
      <Head t="对象" />
      <div className="h-[48px] bg-[#d0d0d0] pl-[8px] pt-[9px]">
        <div className="w-[285px] h-[30px] rounded-[3px] bg-gradient-to-r from-[#e0a472] to-[#d8d4cc] flex justify-end">
          <div className="w-[30px] h-full bg-[#f08850] rounded-[3px] border border-[#bbb]" />
        </div>
      </div>
      <Head t="方向" mt={2} />
      <div className="h-[41px] bg-[#d0d0d0] flex items-center pl-[7px] justify-between pr-[9px]">
        <span>圆柱方向</span>
        <div className="w-[128px] h-[23px] bg-white border border-[#777] rounded-[3px] flex items-center justify-between">
          <div className="flex items-center pl-[3px]">
            <svg width="20" height="18" viewBox="0 0 20 18"><text x="0" y="8" fontSize="7.500" fontWeight="bold" fill="#111" fontFamily="Liberation Sans">ZC</text><path d="M16 6v11" stroke="#1050a0" strokeWidth="1.200" /><path d="M16 3l2 4h-4z" fill="#1050a0" /></svg>
            <span>ZC</span>
          </div>
          <ComboArrow blue />
        </div>
      </div>
      <Head t="设置" mt={1} />
      <div className="h-[165px] bg-[#d0d0d0] relative pl-[7px] pr-[8px] flex flex-col">
        <div className="flex items-center justify-between mt-[7px] pr-[1px]">
          <span className="mt-[1px]">偏置距离（S）</span>
          <div className="w-[128px] h-[22px] border border-[#777] rounded-[3px] flex items-center overflow-hidden bg-[#cfcfcf]">
            <span className="w-[72px] h-full bg-white pl-[4px] leading-[20px]">0</span>
            <span className="flex-1 pl-[4px] tracking-[0.5px]">mm</span>
            <ComboArrow blue down />
          </div>
        </div>
        <div className="flex items-center mt-[5px]">
          <div className="w-[16px] h-[16px] rounded-[3px] border border-[#777] bg-gradient-to-b from-[#ececec] to-[#c4c4c4]" />
          <span className="ml-[2px]">移除参数</span>
        </div>
        <div className="flex items-center justify-between mt-[5px] h-[16px]">
          <span>颜色</span>
          <div className="w-[72px] h-[15px] bg-[#88b4fa] border border-[#666] -mt-[4px]" />
        </div>
        <div className="mt-[5px] h-[16px] leading-[16px]">透明度</div>
        <div className="text-center text-[12px] leading-[14px] mt-[4px] pl-[2px] tracking-[1px]">50</div>
        <div className="relative h-[20px] mt-[4px]">
          <div className="absolute left-[9px] w-[271px] top-[8px] h-[4px] bg-[#f0f0f0] border-y border-[#b4b4b4] rounded-[2px]" />
          <div className="absolute left-[139px] top-0 w-[11px] h-[20px] rounded-t-[5px] rounded-b-[2px] border border-[#2a5a7a] bg-gradient-to-b from-[#dff2ff] to-[#5cc0ea]" />
        </div>
        <div className="flex justify-between mt-[3px] pl-[7px] tracking-[1px]"><span>0</span><span>100</span></div>
      </div>
      <div className="mt-[3px] h-[2px] border-t border-[#aaa] border-b border-b-white" />
      <div className="flex justify-end gap-[7px] mt-[4px] pr-[10px]"><Btn t="确定" /><Btn t="应用" /><Btn t="取消" on /></div>
      <div className="absolute left-[15px] top-[59px] w-[287px] h-[62px] bg-white border border-[#666] flex flex-col z-10">
        <div className="h-[20px] flex items-center pl-[3px] gap-[3px]"><svg width="15" height="15" viewBox="0 0 24 24">{blue(1, 1, 22)}</svg><span>立方体边界框</span></div>
        <div className="h-[20px] flex items-center pl-[3px] gap-[4px] bg-[#3399ff] text-white"><CylI /><span>圆柱体边界框</span></div>
        <div className="h-[20px] flex items-center pl-[3px] gap-[3px]"><svg width="15" height="15" viewBox="0 0 15 15"><path d="M3 7.500l5-4v2.500h5v3H8v2.500z" fill="#667788" stroke="#334" strokeWidth=".5" /></svg><span>显示快捷方式</span></div>
      </div>
    </div>
    <div className="h-[8px] shrink-0 bg-[#1a1a1a] rounded-b-[4px] border-t border-[#888]" />
  </div>
);

const FloatBar = () => (
  <div className="absolute left-[565px] top-[5px] w-[411px] h-[64px] flex flex-col rounded-[4px] overflow-hidden">
    <div className="h-[22px] bg-[#1a1a1a] flex items-center text-white">
      <span className="ml-[8px] text-[14px] font-bold tracking-[1.3px]">NXOpen森焱工具(建模)</span>
      <svg width="8" height="5" viewBox="0 0 8 5" className="ml-auto mr-[8px]"><path d="M0 0h8L4 4.500z" fill="#fff" /></svg>
      <div className="w-[21px] h-full border-l border-[#888] flex items-center justify-center">
        <svg width="12" height="12" viewBox="0 0 12 12"><path d="M1.500 1.500l9 9M10.500 1.500l-9 9" stroke="#fff" strokeWidth="2.600" /></svg>
      </div>
    </div>
    <div className="h-[34px] bg-gradient-to-b from-[#e8e8e8] to-[#c8c8c8]"><Row items={FT} /></div>
    <div className="h-[8px] bg-[#1a1a1a] border-t border-[#777]" />
  </div>
);

const top = { cx: 692, cy: 303, a: 190.7, b: 118.3, r: 9.86 };
const Ell = ({ dx = 0, dy = 0, ...p }: { dx?: number; dy?: number } & React.SVGProps<SVGEllipseElement>) => (
  <ellipse cx={top.cx + dx} cy={top.cy + dy} rx={top.a} ry={top.b} transform={`rotate(${top.r} ${top.cx + dx} ${top.cy + dy})`} {...p} />
);
const TRI = '693,297 531,412 766,559';
const SLIVER = '693,297 734,389 738,413 740,423 767,559';

const Model = () => (
  <svg className="absolute left-0 top-0" width="1282" height="563" viewBox="38 120 1282 563">
    <defs>
      <linearGradient id="gt" x1="0" x2="1"><stop offset="0" stopColor="#b6dcec" /><stop offset=".55" stopColor="#a9cfe0" /><stop offset="1" stopColor="#b2d8ea" /></linearGradient>
      <linearGradient id="gb" x1="0" x2="1"><stop offset="0" stopColor="#a2c2e0" /><stop offset=".45" stopColor="#8fa9c2" /><stop offset="1" stopColor="#a2c0de" /></linearGradient>
      <clipPath id="ct"><Ell /></clipPath>
    </defs>
    <polygon points="503,283 484,427 862,467 881,323" fill="#8aa3cb" />
    <Ell dy={144} dx={-19} fill="url(#gb)" stroke="#444" strokeWidth=".8" />
    <polygon points={TRI} fill="#5f7085" stroke="#3c4a5c" strokeWidth=".6" />
    <polygon points={SLIVER} fill="#6e829c" stroke="#46566a" strokeWidth=".6" />
    <Ell fill="url(#gt)" stroke="#333" strokeWidth=".9" />
    <g clipPath="url(#ct)">
      <Ell dy={144} dx={-19} fill="#c8f6ff" stroke="#6a7a80" strokeWidth=".8" />
      <polygon points={TRI} fill="#97bac4" />
      <polygon points={SLIVER} fill="#a0c4ca" stroke="#6f8a90" strokeWidth=".7" />
      <line x1="693" y1="297" x2="767" y2="559" stroke="#6a8086" strokeWidth=".8" />
      <line x1="693" y1="297" x2="531" y2="412" stroke="#7a9098" strokeWidth=".6" />
    </g>
    <path d="M866 280h10M871 275v10" stroke="#7a98d8" strokeWidth="1" />
    <path d="M488 471h10M493 466v10" stroke="#3860c0" strokeWidth="1" />
  </svg>
);

const Combo = ({ t, w, ml }: { t: string; w: string; ml: string }) => (
  <div className={`${w} ${ml} h-[20px] rounded-[3px] border border-[#777] bg-white flex items-center justify-between shrink-0`}>
    <span className="pl-[1px] text-[12px] text-black">{t}</span>
    <ComboArrow blue />
  </div>
);

const BottomBar = () => (
  <div className="h-[30px] shrink-0 relative bg-gradient-to-b from-[#8c8c8c] via-[#d4d4d4] via-[25%] to-[#d8d8d8] border-b border-[#eeeeee]">
    <Row items={B} fade />
    <div className="absolute left-0 top-[5px] flex">
      <Combo t="实体" w="w-[146px]" ml="ml-[6px]" />
      <Combo t="仅在工作部件内" w="w-[154px]" ml="ml-[9px]" />
    </div>
  </div>
);

const StatusBar = () => (
  <div className="h-[23px] shrink-0 bg-gradient-to-b from-[#dcdcdc] to-[#d4d4d4] flex items-center relative">
    <span className="ml-[3px] text-[13px] font-bold text-black">选择体</span>
    <div className="absolute left-[626px] top-0 h-full w-[1px] bg-[#f4f4f4]" />
    <div className="absolute left-[1252px] top-0 h-full w-[1px] bg-[#f4f4f4]" />
    <div className="absolute left-[1272px] top-0 h-full w-[1px] bg-[#f4f4f4]" />
    <div className="absolute left-[1348px] top-0 h-full w-[1px] bg-[#f4f4f4]" />
    <div className="absolute left-[1275px] top-[3px] w-[16px] h-[16px] bg-[#7a9098] flex items-center justify-center">
      <svg width="12" height="12" viewBox="0 0 12 12"><path d="M1 3l10-2v7L1 10z" fill="#aaa" /><path d="M1 5l10-2M1 7l10-2M4 2v8M7 2v7" stroke="#666" strokeWidth=".7" /></svg>
    </div>
    <div className="absolute left-[1296px] top-[3px] w-[14px] h-[16px] border border-[#555] bg-white flex items-center justify-center">
      <div className="w-[8px] h-[9px] bg-gradient-to-b from-[#1a3a9a] to-[#6aa0f0]" />
    </div>
  </div>
);

const Watermark = () => (
  <div className="absolute left-[1066px] top-[636px] w-[300px] h-[98px] pointer-events-none">
    <svg width="84" height="98" viewBox="0 0 84 98" className="absolute left-0 top-0">
      <path d="M41 0l42 24v54L41 98 0 78V24z" fill="#fff" opacity=".8" />
      <path d="M41 2L81 25v52L41 95 2 77V25z" fill="#74a6da" />
      <path d="M41 2L81 25v52l-14 7C78 66 76 32 41 2z" fill="#74c8ef" />
      <path d="M81 77L41 95 2 77l0-6C20 90 52 92 67 66z" fill="#66bce2" />
      <path d="M2 25v46C4 48 20 28 34 22z" fill="#6a9ad2" />
      <g fill="none" stroke="#fff" strokeWidth="1" opacity=".8"><path d="M41 2C64 20 78 40 67 84" /><path d="M2 71C20 90 52 92 81 66" /><path d="M2 70C4 48 20 28 40 20" /></g>
      <path d="M41 21l24 14v25L41 74 17 60V35z" fill="#fff" />
      <path d="M41 26l20 11.500-20 11.500-20-11.500z" fill="#74a6da" />
      <path d="M21 39.500l19 11v18L21 57.500z" fill="#6496cc" />
      <path d="M61 39.500l-19 11v18l19-11z" fill="#6cc4ec" />
    </svg>
    <div className="absolute left-[93px] top-[8px] text-[46px] leading-[50px] font-bold text-[#6cc3ec] whitespace-nowrap [-webkit-text-stroke:5px_#ffffffd0] [paint-order:stroke_fill]">3D世界网</div>
    <div className="absolute left-[94px] top-[62px] text-[17px] leading-[20px] font-bold text-[#6cc3ec] tracking-[1px] whitespace-nowrap font-['DejaVu_Sans',sans-serif] [-webkit-text-stroke:3px_#ffffffd0] [paint-order:stroke_fill]">WWW.3DSJW.COM</div>
  </div>
);

export default function App() {
  return (
    <div className={`${FONT} w-[1366px] h-[738px] relative overflow-hidden flex flex-col bg-white`}>
      <TitleBar />
      <MenuBar />
      <Toolbar items={T1}>
        <span className="absolute left-[39px] top-[8px] text-[12px] text-black">开始</span>
      </Toolbar>
      <Toolbar items={T2} />
      <div className="h-[563px] shrink-0 flex">
        <LeftBar />
        <div className="flex-1 relative bg-white">
          <Model />
          <FloatBar />
          <Dialog />
        </div>
        <RightBar />
      </div>
      <BottomBar />
      <StatusBar />
      <div className="h-[2px] bg-black shrink-0" />
      <Watermark />
    </div>
  );
}
